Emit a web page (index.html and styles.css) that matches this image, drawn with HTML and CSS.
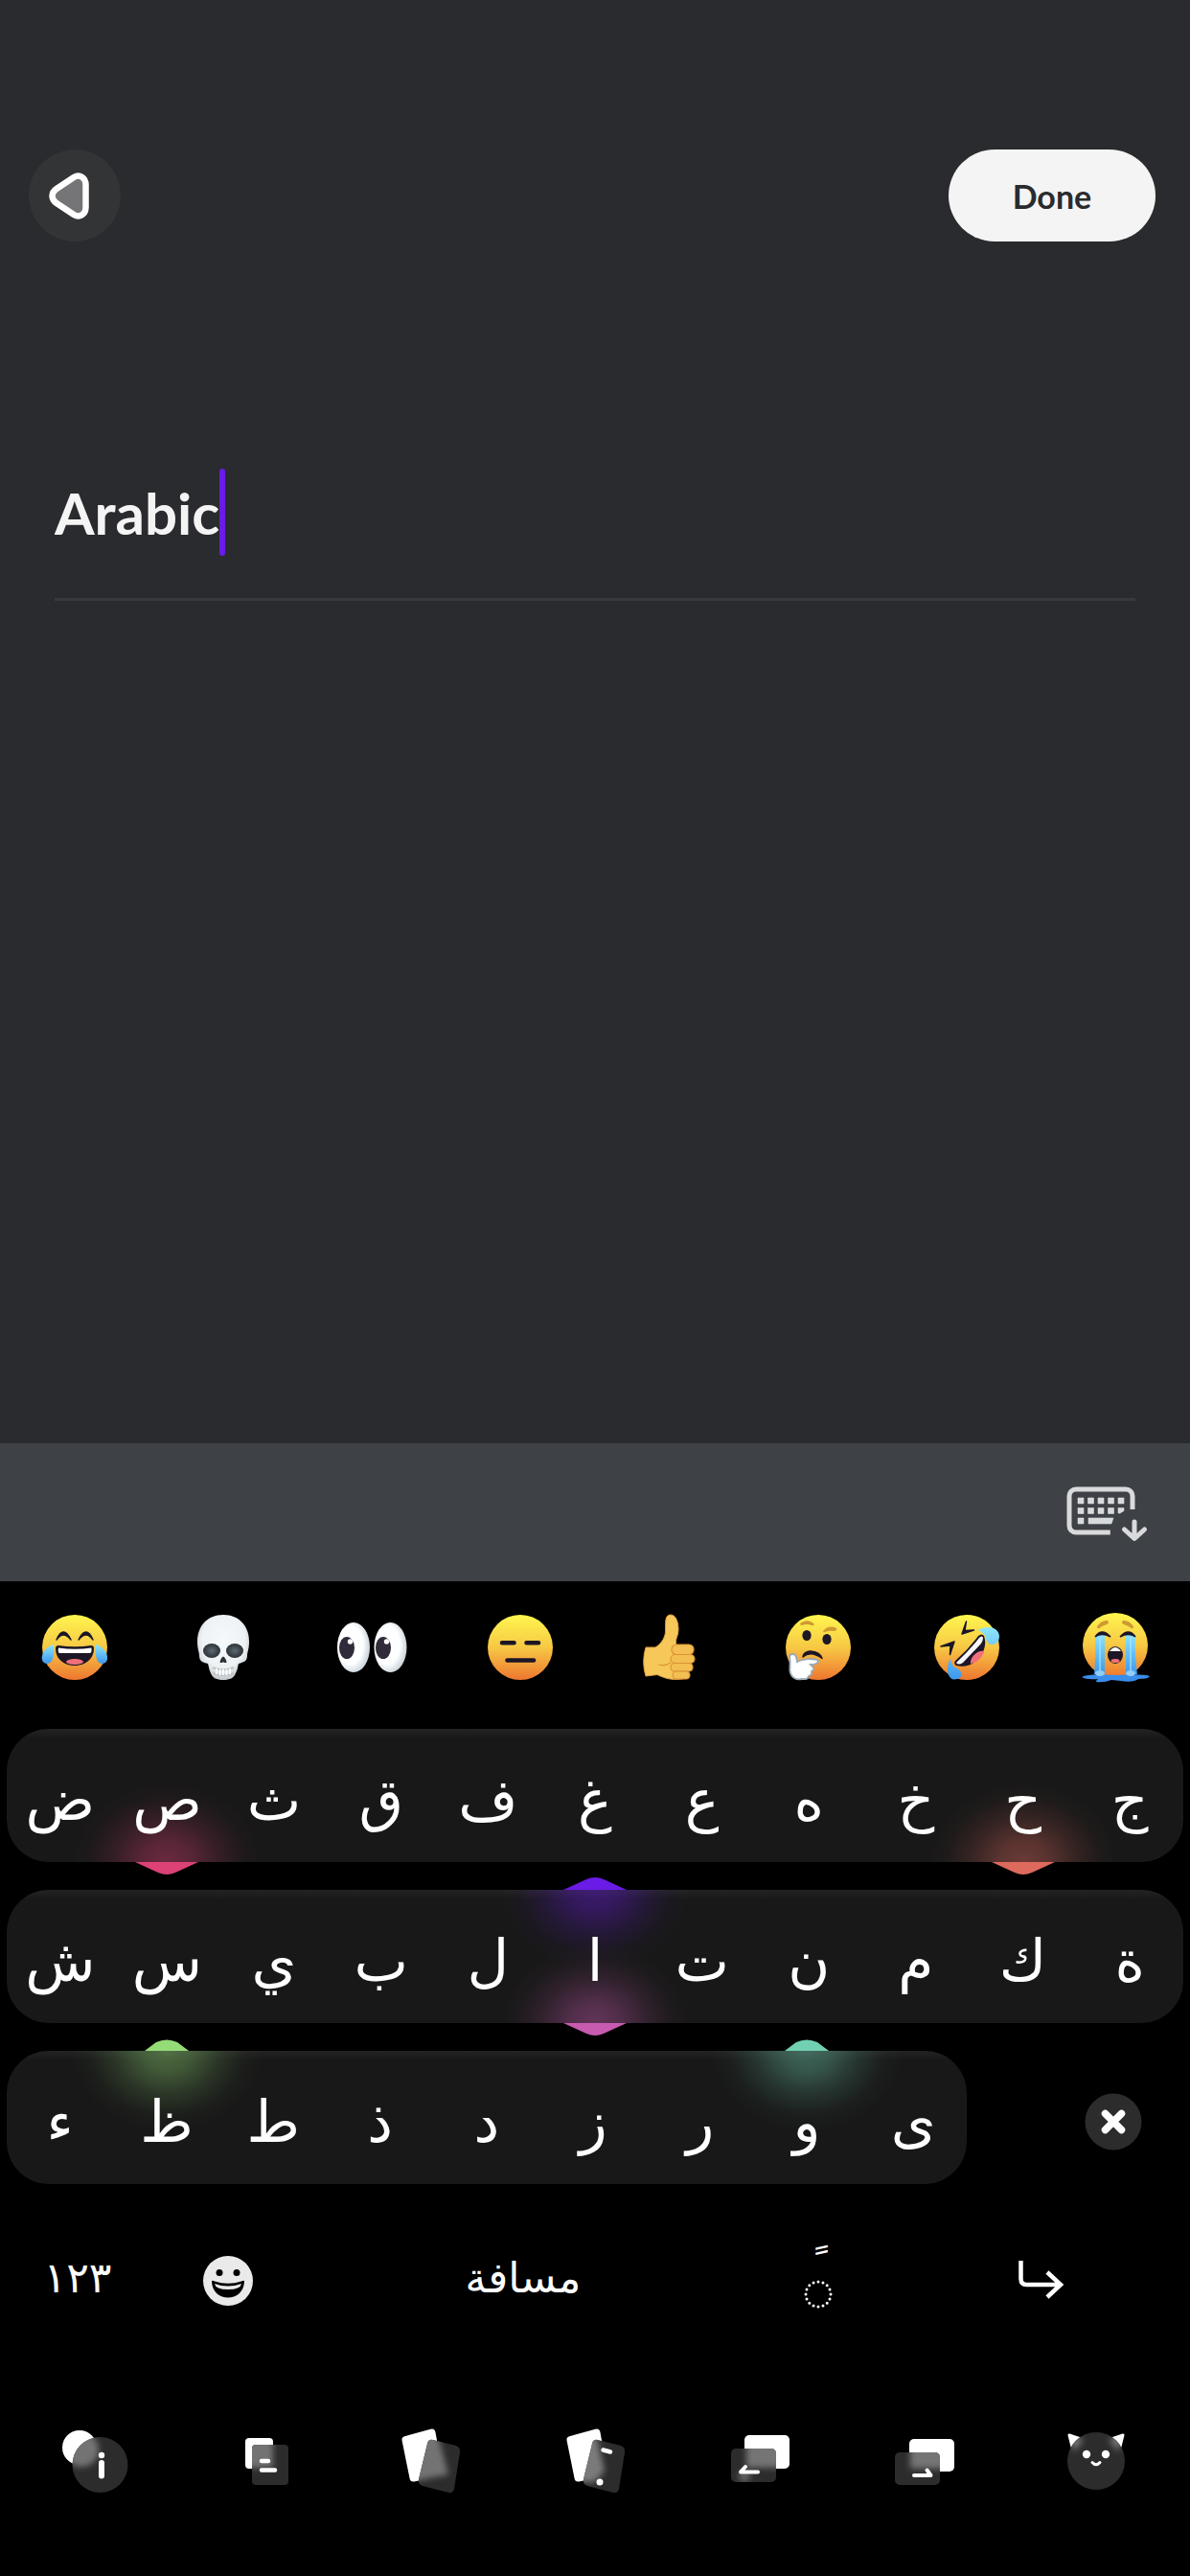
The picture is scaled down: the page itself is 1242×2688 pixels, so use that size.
FILE: index.html
```html
<!DOCTYPE html>
<html lang="en">
<head>
<meta charset="utf-8">
<meta name="viewport" content="width=device-width, initial-scale=1">
<title>Arabic</title>
<link rel="stylesheet" href="styles.css">
</head>
<body>
<svg class="defs" aria-hidden="true">
  <defs>
    <linearGradient id="face" x1="0" y1="0" x2="0" y2="1">
      <stop offset="0" stop-color="#fff64f"/><stop offset=".5" stop-color="#f7c844"/><stop offset="1" stop-color="#ee7630"/>
    </linearGradient>
    <linearGradient id="tear" x1="0" y1="0" x2="0" y2="1">
      <stop offset="0" stop-color="#8fe6fb"/><stop offset="1" stop-color="#3d97ee"/>
    </linearGradient>
    <radialGradient id="bone" cx=".5" cy=".4" r=".6">
      <stop offset="0" stop-color="#f5f9fb"/><stop offset=".7" stop-color="#eef2f4"/><stop offset="1" stop-color="#c3c7cb"/>
    </radialGradient>
    <radialGradient id="eyeball" cx=".4" cy=".45" r=".6">
      <stop offset="0" stop-color="#fff"/><stop offset=".65" stop-color="#fdfeff"/><stop offset="1" stop-color="#c9d4da"/>
    </radialGradient>
    <radialGradient id="socket"><stop offset="0" stop-color="#5b6a72"/><stop offset="1" stop-color="#2d3238"/></radialGradient>
    <filter id="soft" x="-50%" y="-50%" width="200%" height="200%"><feGaussianBlur stdDeviation="3"/></filter>
  </defs>
</svg>

<main class="editor">
  <header class="topbar">
    <button class="back" type="button" aria-label="Back">
      <svg width="96" height="96" viewBox="0 0 96 96"><path d="M59.5 37C59.500 29 53 25.500 47 29L29 41C23 45 23 52 29 56L47 68C53 71.500 59.500 68 59.500 60Z" fill="#757577" stroke="#fff" stroke-width="6.500"/></svg>
    </button>
    <button class="done" type="button">Done</button>
  </header>
  <div class="field">
    <input class="name" type="text" value="Arabic" aria-label="Name" size="5">
    <span class="caret"></span>
  </div>
</main>

<div class="accessory">
  <button class="hide" type="button" aria-label="Hide keyboard">
    <svg width="90" height="64" viewBox="0 0 90 64" fill="#d9dadc">
      <path d="M48.800 53H13a7 7 0 0 1-7-7V15a7 7 0 0 1 7-7H65a7 7 0 0 1 7 7V29" fill="none" stroke="#d9dadc" stroke-width="5"/>
      <path d="M15 17h6v6h-6zM25.500 17h6v6h-6zM36 17h6v6h-6zM46.500 17h6v6h-6zM57 17h6v6h-6zM15 27.500h6v6h-6zM25.500 27.500h6v6h-6zM36 27.500h6v6h-6zM46.500 27.500h6v6h-6zM57 27.500h6v3l-4 2.500h-2zM15 38h6v6h-6zM26 38H52l-2 6H26z" stroke="#d9dadc" stroke-width=".6" stroke-linejoin="round"/>
      <path d="M74 42V59M63.500 50L74 59.500L84.500 50" fill="none" stroke="#d9dadc" stroke-width="5" stroke-linecap="round" stroke-linejoin="round"/>
    </svg>
  </button>
</div>

<section class="keyboard" aria-label="Keyboard">
  <div class="emojis">
    <button type="button" aria-label="Tears of joy"><svg width="84" height="84" viewBox="0 0 84 84">
      <circle cx="42" cy="42" r="34" fill="url(#face)"/>
      <path d="M23 34Q30 18 38 34Q30 24 23 34ZM46 34Q54 18 61 34Q54 24 46 34Z" fill="#1c1626" stroke="#1c1626" stroke-width="1.500" stroke-linejoin="round"/>
      <path d="M22 43Q22 40 25 40Q42 42.500 59 40Q62 40 62 43C62 67 22 67 22 43Z" fill="#1c1626"/>
      <path d="M25 42.500Q42 45 59.500 42.500Q60 48 57.500 48H26.500Q24 48 25 42.500Z" fill="#fff"/>
      <ellipse cx="42" cy="57" rx="9" ry="3" fill="#f0707c"/>
      <path d="M20 39C21 49 20 59 13 59C4 58 7 43 20 39ZM64 39C63 49 64 59 71 59C80 58 77 43 64 39Z" fill="url(#tear)"/></svg></button>
    <button type="button" aria-label="Skull"><svg width="84" height="84" viewBox="0 0 84 84">
      <path d="M42 8C59 8 69 20 69 36C69 44 67 47 67 51C67 57 62 58 58 59C57 62 57 65 55 69C53 74 49 76 42 76S31 74 29 69C27 65 27 62 26 59C22 58 17 57 17 51C17 47 15 44 15 36C15 20 25 8 42 8Z" fill="url(#bone)"/>
      <ellipse cx="30" cy="45.500" rx="9" ry="7.500" fill="url(#socket)"/><ellipse cx="54" cy="45.500" rx="9" ry="7.500" fill="url(#socket)"/>
      <path d="M42 51.500Q45 53 45.500 58H43L42 57L41 58H38.500Q39 53 42 51.500Z" fill="#2d3238"/>
      <path d="M31 63Q42 68 53 63M31 69Q42 73 53 69" fill="none" stroke="#bfc4c8" stroke-width="2"/>
      <path d="M35 64V70M38.500 65V71M42 65V71M45.500 65V71M49 64V70" stroke="#fff" stroke-width="2"/></svg></button>
    <button type="button" aria-label="Eyes"><svg width="84" height="84" viewBox="0 0 84 84">
      <ellipse cx="23" cy="42" rx="17" ry="26" fill="url(#eyeball)"/><ellipse cx="61.500" cy="42" rx="17" ry="26" fill="url(#eyeball)"/>
      <ellipse cx="16" cy="42.500" rx="8" ry="11.500" fill="#302b3a"/><ellipse cx="54" cy="42.500" rx="8" ry="11.500" fill="#302b3a"/>
      <circle cx="19.500" cy="36" r="2.700" fill="#fff"/><circle cx="57.500" cy="36" r="2.700" fill="#fff"/></svg></button>
    <button type="button" aria-label="Expressionless"><svg width="84" height="84" viewBox="0 0 84 84">
      <circle cx="42" cy="42" r="34" fill="url(#face)"/>
      <path d="M23 37.300H35.500M48.500 37.300H61M28.500 55.500H56" stroke="#1c1626" stroke-width="4.600" stroke-linecap="round"/></svg></button>
    <button type="button" aria-label="Thumbs up"><svg width="84" height="84" viewBox="0 0 84 84">
      <path d="M17 42H27C32 39 37 33 37.500 26C38 18 36 8 43 8C49 8 51 17 51 23C51 31 47 33 49 40L60 41V74C46 77 38 75 29 70.500L17 72C14 62 14 52 17 42Z" fill="#f6c85a" stroke="#dfa244" stroke-width="1"/>
      <g fill="#f3bf52" stroke="#dc9336" stroke-width="1.200"><rect x="44" y="39" width="23" height="10.500" rx="5"/><rect x="43" y="49.500" width="25" height="9" rx="4.500"/><rect x="43" y="58.500" width="23" height="8.500" rx="4"/><rect x="45" y="67" width="18" height="8" rx="4"/></g>
      <path d="M30 60Q37 62 43 58" fill="none" stroke="#dc9336" stroke-width="1.200"/></svg></button>
    <button type="button" aria-label="Thinking"><svg width="84" height="84" viewBox="0 0 84 84">
      <circle cx="42" cy="42" r="34" fill="url(#face)"/>
      <ellipse cx="30" cy="29.500" rx="4.600" ry="5.500" fill="#1c1626"/><ellipse cx="51" cy="33.500" rx="4.600" ry="5.500" fill="#1c1626"/>
      <path d="M23 17Q31 11 38 18Q37 20 35 19Q30 17 25 19Q23 19 23 17ZM47 25Q53 18 61 22Q62 24 59 25Q54 24 49 26Q47 27 47 25Z" fill="#cf9a32"/>
      <path d="M26 52Q34 45 46 53.500C44 45 27 43 26 52Z" fill="#1c1626" stroke="#1c1626" stroke-width="1.500" stroke-linejoin="round"/>
      <path d="M12 52C12 48 18 48 19 52L20 57C25 54 29 55 32 54Q41 54 42 56Q42 60 34 60L37 63Q38 66 35 67Q36 71 32 72Q31 76 25 75Q16 77 13 69C11 63 14 60 12 52Z" fill="#fff" stroke="#9aa9b4" stroke-width="1.800"/></svg></button>
    <button type="button" aria-label="Rolling on the floor laughing"><svg width="84" height="84" viewBox="0 0 84 84">
      <circle cx="42" cy="42" r="34" fill="url(#face)"/>
      <path d="M41.500 15L37 28L49.500 24L40 24.500ZM15 41L29 36L24.500 49.500L25 40Z" fill="#1c1626" stroke="#1c1626" stroke-width="1.500" stroke-linejoin="round"/>
      <path d="M54 30Q58 27 60 30C66 46 49 66 31 61Q28 59 30 56Q44 44 54 30Z" fill="#1c1626"/>
      <path d="M55 32Q58 29 59 32Q59 35 57 38L38 58Q33 61 31 58Q45 45 55 32Z" fill="#f8f8fa"/>
      <path d="M46 59C45 52 54 44 60 46C59 52 53 58 46 59Z" fill="#f0707c"/>
      <path d="M54 24C62 19 75 20 76 30C76 41 64 42 62 33C61 27 57 26 54 24ZM25 54C20 61 21 75 29 75.500C39 75 38 67 32 64C27 62 26 58 25 54Z" fill="url(#tear)"/></svg></button>
    <button type="button" aria-label="Loudly crying"><svg width="84" height="84" viewBox="0 0 84 84">
      <circle cx="42" cy="40" r="34" fill="url(#face)"/>
      <path d="M7 73Q14 69 42 71Q70 69 78 72Q77 75 66 75Q60 79 48 77L38 76Q30 79 22 78Q22 76 24 75Q12 76 7 73Z" fill="#3b8eea"/>
      <path d="M21 29Q26 26 31 29V70H20Q22 50 21 29ZM53 29Q58 26 63 29Q62 50 65 70H53Z" fill="url(#tear)"/>
      <path d="M26 32V66M58 32V66" stroke="#a6e8fb" stroke-width="2" opacity=".6"/>
      <ellipse cx="26" cy="69" rx="5" ry="3" fill="#8ed0fa"/><ellipse cx="58" cy="69" rx="5" ry="3" fill="#8ed0fa"/>
      <path d="M21 31Q28 21 37 31Q28 26 21 31ZM47 31Q56 21 63 31Q56 26 47 31Z" fill="#1c1626" stroke="#1c1626" stroke-width="1.500"/>
      <path d="M23 21Q27 14 34 14.500Q36 17 32 18Q28 19 25 22ZM61 21Q57 14 50 14.500Q48 17 52 18Q56 19 59 22Z" fill="#cf9a32" stroke="#cf9a32"/>
      <ellipse cx="42" cy="50" rx="8" ry="9" fill="#1c1626"/><path d="M36 46Q42 38 48 46Z" fill="#fff"/><ellipse cx="42" cy="56" rx="4.500" ry="2" fill="#f0707c"/></svg></button>
  </div>

  <div class="rows">
    <div class="row">
      <button type="button">ض</button>
      <button type="button"><i class="glow low pink"></i><svg class="tab low pink" viewBox="0 0 66 13"><path d="M0 0H66L42 11Q33 15 24 11Z"/></svg>ص</button>
      <button type="button">ث</button>
      <button type="button">ق</button>
      <button type="button">ف</button>
      <button type="button">غ</button>
      <button type="button">ع</button>
      <button type="button">ه</button>
      <button type="button">خ</button>
      <button type="button"><i class="glow low coral"></i><svg class="tab low coral" viewBox="0 0 66 13"><path d="M0 0H66L42 11Q33 15 24 11Z"/></svg>ح</button>
      <button type="button">ج</button>
    </div>
    <div class="row">
      <button type="button">ش</button>
      <button type="button">س</button>
      <button type="button">ي</button>
      <button type="button">ب</button>
      <button type="button">ل</button>
      <button type="button"><i class="glow high violet"></i><i class="glow low orchid"></i><svg class="tab high violet" viewBox="0 0 66 13"><path d="M0 13H66L42 2Q33 -2 24 2Z"/></svg><svg class="tab low orchid" viewBox="0 0 66 13"><path d="M0 0H66L42 11Q33 15 24 11Z"/></svg>ا</button>
      <button type="button">ت</button>
      <button type="button">ن</button>
      <button type="button">م</button>
      <button type="button">ك</button>
      <button type="button">ة</button>
    </div>
    <div class="split">
      <div class="row">
        <button type="button">ء</button>
        <button type="button"><i class="glow high green"></i><svg class="tab high green" viewBox="0 0 66 13"><path d="M10 13H56L44 4Q33 -1 22 4Z"/></svg>ظ</button>
        <button type="button">ط</button>
        <button type="button">ذ</button>
        <button type="button">د</button>
        <button type="button">ز</button>
        <button type="button">ر</button>
        <button type="button"><i class="glow high teal"></i><svg class="tab high teal" viewBox="0 0 66 13"><path d="M10 13H56L44 4Q33 -1 22 4Z"/></svg>و</button>
        <button type="button">ى</button>
      </div>
      <button class="delete" type="button" aria-label="Delete"><svg width="60" height="60" viewBox="0 0 60 60"><circle cx="30" cy="30" r="29.500" fill="#2c2c2c"/><path d="M21.500 21.500L38.500 38.500M38.500 21.500L21.500 38.500" stroke="#fff" stroke-width="7.500" stroke-linecap="round"/></svg></button>
    </div>
  </div>

  <div class="controls">
    <button class="digits" type="button">١٢٣</button>
    <button type="button" aria-label="Emoji"><svg width="56" height="56" viewBox="0 0 56 56"><circle cx="28" cy="28" r="26" fill="#eaeaea"/><circle cx="19" cy="19.500" r="3.500"/><circle cx="37" cy="19.500" r="3.500"/><path d="M11 29Q11 27 14 28.500Q28 33 42 28.500Q45 27 45 29C44 51 12 51 11 29Z"/><path d="M14 31Q28 36 42 31Q41 37 28 37T14 31Z" fill="#eaeaea"/></svg></button>
    <button class="space" type="button">مسافة</button>
    <button class="marks" type="button"><span>&nbsp;ً</span><svg width="32" height="32" viewBox="0 0 32 32"><circle cx="16" cy="16" r="13" pathLength="160" fill="none" stroke="#fff" stroke-width="3" stroke-linecap="round" stroke-dasharray="0 10"/></svg></button>
    <button type="button" aria-label="Return"><svg width="60" height="52" viewBox="0 0 60 52"><path d="M9.500 5V24Q9.500 30 15.500 30H51M37 17L51 30L37 43" fill="none" stroke="#fff" stroke-width="4.500"/></svg></button>
  </div>

  <nav class="tools" aria-label="Keyboard tools">
    <button type="button" aria-label="Info"><svg width="96" height="96" viewBox="0 0 96 96">
      <clipPath id="c1"><circle cx="47.500" cy="52" r="29"/></clipPath>
      <circle cx="26" cy="34" r="18" fill="#fff"/><circle cx="47.500" cy="52" r="29" fill="#2c2c2c"/>
      <g clip-path="url(#c1)"><circle cx="28" cy="36" r="18" fill="#737373" filter="url(#soft)"/></g>
      <circle cx="49" cy="42" r="3.200" fill="#fff"/><rect x="46" y="47" width="6" height="19.500" rx="3" fill="#fff"/></svg></button>
    <button type="button" aria-label="Clipboard"><svg width="96" height="96" viewBox="0 0 96 96">
      <clipPath id="c2"><rect x="34" y="31" width="38" height="42" rx="4"/></clipPath>
      <rect x="27" y="24" width="29" height="32" rx="4" fill="#fff"/><rect x="34" y="31" width="38" height="42" rx="4" fill="#2c2c2c"/>
      <g clip-path="url(#c2)"><path d="M22 20H56V55H22Z" fill="#737373" filter="url(#soft)"/></g>
      <path d="M44 48H51M44 57.500H58" stroke="#fff" stroke-width="4.500" stroke-linecap="round"/></svg></button>
    <button type="button" aria-label="Cards"><svg width="96" height="96" viewBox="0 0 96 96">
      <clipPath id="c3"><path d="M45 30Q46 25 51 26L75 32Q80 34 79 39L73 77Q72 82 67 81L40 74Q35 72 36 67Z"/></clipPath>
      <path d="M22.500 26L49.500 18.500L57 60L30.500 65.500Z" fill="#fff" stroke="#fff" stroke-width="8" stroke-linejoin="round"/>
      <g clip-path="url(#c3)"><path d="M0 0H96V96H0Z" fill="#2c2c2c"/><path d="M18 22L54 14L67 62L27 70Z" fill="#737373" filter="url(#soft)"/></g></svg></button>
    <button type="button" aria-label="Card settings"><svg width="96" height="96" viewBox="0 0 96 96">
      <path d="M22.500 26L49.500 18.500L57 60L30.500 65.500Z" fill="#fff" stroke="#fff" stroke-width="8" stroke-linejoin="round"/>
      <g clip-path="url(#c3)"><path d="M0 0H96V96H0Z" fill="#2c2c2c"/><path d="M18 22L49 20L58 58L48 70L27 70Z" fill="#7a7a7a" filter="url(#soft)"/></g>
      <path d="M56.500 36.500L64 38.500" stroke="#fff" stroke-width="4.500" stroke-linecap="round"/><circle cx="53" cy="70" r="3.500" fill="#fff"/></svg></button>
    <button type="button" aria-label="Cursor left"><svg width="96" height="96" viewBox="0 0 96 96">
      <clipPath id="c5"><rect x="18" y="35" width="47" height="35" rx="5"/></clipPath>
      <rect x="32" y="21" width="47" height="35" rx="5" fill="#fff"/><rect x="18" y="35" width="47" height="35" rx="5" fill="#2c2c2c"/>
      <g clip-path="url(#c5)"><path d="M34 21H79V55H34Z" fill="#747474" filter="url(#soft)"/><circle cx="32" cy="64" r="6" fill="#666" filter="url(#soft)"/></g>
      <path d="M46 59.500H28L33 54" fill="none" stroke="#fff" stroke-width="4" stroke-linecap="round" stroke-linejoin="round"/></svg></button>
    <button type="button" aria-label="Cursor right"><svg width="96" height="96" viewBox="0 0 96 96">
      <clipPath id="c6"><rect x="17" y="39" width="47" height="34" rx="5"/></clipPath>
      <rect x="32" y="25" width="47" height="34" rx="5" fill="#fff"/><rect x="17" y="39" width="47" height="34" rx="5" fill="#2c2c2c"/>
      <g clip-path="url(#c6)"><path d="M33 25H79V56H33Z" fill="#747474" filter="url(#soft)"/></g>
      <path d="M37 63H54.500L50.500 57.500" fill="none" stroke="#fff" stroke-width="4" stroke-linecap="round" stroke-linejoin="round"/></svg></button>
    <button type="button" aria-label="Cat"><svg width="96" height="96" viewBox="0 0 96 96">
      <clipPath id="c7"><circle cx="55" cy="48" r="30"/></clipPath>
      <path d="M27 21L39 25L30 33ZM83 21L71 25L80 33Z" fill="#fff" stroke="#fff" stroke-width="3" stroke-linejoin="round"/>
      <circle cx="55" cy="48" r="30" fill="#2c2c2c"/>
      <g clip-path="url(#c7)"><path d="M26 19L42 26L32 38ZM84 19L68 26L78 38Z" fill="#777" filter="url(#soft)"/></g>
      <circle cx="45" cy="41" r="4.200" fill="#fff"/><circle cx="65" cy="41" r="4.200" fill="#fff"/>
      <path d="M51 49.500Q55 54 59 49.500" fill="none" stroke="#fff" stroke-width="3" stroke-linecap="round"/></svg></button>
  </nav>
</section>
</body>
</html>
```
FILE: styles.css
```css
* {
  box-sizing: border-box;
}

body {
  margin: 0;
  min-height: 100vh;
  display: flex;
  flex-direction: column;
  background: #2a2b2e;
  color: #fff;
  font-family: Lato, "DejaVu Sans", sans-serif;
}

button,
input {
  margin: 0;
  padding: 0;
  border: 0;
  background: none;
  color: inherit;
  font: inherit;
}

svg {
  display: block;
}

.defs {
  position: absolute;
  width: 0;
  height: 0;
}

.editor {
  flex: 1;
  padding-top: 156px;
}

.topbar {
  display: flex;
  justify-content: space-between;
  padding: 0 36px 0 30px;
}

.back {
  width: 96px;
  height: 96px;
  border-radius: 50%;
  background: #333436;
}

.done {
  width: 216px;
  height: 96px;
  border-radius: 48px;
  background: #f4f4f4;
  color: #2a2b2e;
  font-size: 34px;
  font-weight: 700;
}

.field {
  display: flex;
  margin: 237px 57px 0;
  padding-bottom: 44px;
  border-bottom: 3px solid #38393d;
}

.name {
  field-sizing: content;
  height: 91px;
  outline: 0;
  color: #f4f4f4;
  font-size: 60px;
  font-weight: 700;
}

.caret {
  width: 6px;
  height: 91px;
  border-radius: 3px;
  background: #6a1be6;
}

.accessory {
  display: flex;
  justify-content: flex-end;
  align-items: center;
  height: 144px;
  padding-right: 42px;
  background: #3e4145;
}

.keyboard {
  padding-bottom: 72px;
  background: #000;
  font-family: "DejaVu Sans", sans-serif;
}

.emojis {
  display: grid;
  grid-template-columns: repeat(8, 1fr);
  justify-items: center;
  align-items: center;
  height: 138px;
}

.rows {
  display: flex;
  flex-direction: column;
  gap: 29px;
  padding: 16px 7px 0;
}

.row {
  position: relative;
  isolation: isolate;
  display: flex;
  height: 139px;
  border-radius: 44px;
  background: linear-gradient(#232323, #181818 10px);
}

.row button {
  position: relative;
  flex: 1;
  padding-top: 8px;
  font-size: 60px;
  line-height: 80px;
}

.glow {
  position: absolute;
  z-index: -1;
  left: 50%;
  width: 200px;
  height: 84px;
  margin-left: -100px;
  opacity: 0.42;
}

.glow.low {
  bottom: 0;
  background: radial-gradient(100px 84px at 50% 100%, currentColor, rgb(from currentColor r g b / 0.8) 25%, rgb(from currentColor r g b / 0.35) 55%, rgb(from currentColor r g b / 0.08) 80%, transparent);
}

.glow.high {
  top: 0;
  background: radial-gradient(100px 84px at 50% 0, currentColor, rgb(from currentColor r g b / 0.8) 25%, rgb(from currentColor r g b / 0.35) 55%, rgb(from currentColor r g b / 0.08) 80%, transparent);
}

.tab {
  position: absolute;
  left: 50%;
  width: 66px;
  height: 13px;
  margin-left: -33px;
  fill: currentColor;
}

.tab.low {
  top: 100%;
}

.tab.high {
  bottom: 100%;
}

.pink { color: #dc4275; }
.coral { color: #de6a5e; }
.violet { color: #6a1be6; }
.orchid { color: #c65bb0; }
.green { color: #95dc78; }
.teal { color: #72d0b2; }

.split {
  display: grid;
  grid-template-columns: 1002fr 226fr;
}

.delete {
  display: grid;
  place-items: center;
  padding: 9px 0 0 80px;
}

.controls {
  display: grid;
  grid-template-columns: 162fr 152fr 464fr 151fr 313fr;
  height: 120px;
  margin-top: 41px;
}

.controls button {
  display: grid;
  place-items: center;
  font-size: 44px;
}

.controls .digits,
.controls .space {
  padding-bottom: 8px;
}

.controls .marks {
  align-content: center;
  line-height: 28px;
}

.tools {
  display: grid;
  grid-template-columns: repeat(7, 1fr);
  justify-items: center;
  margin-top: 80px;
  padding: 0 19px;
}
```
